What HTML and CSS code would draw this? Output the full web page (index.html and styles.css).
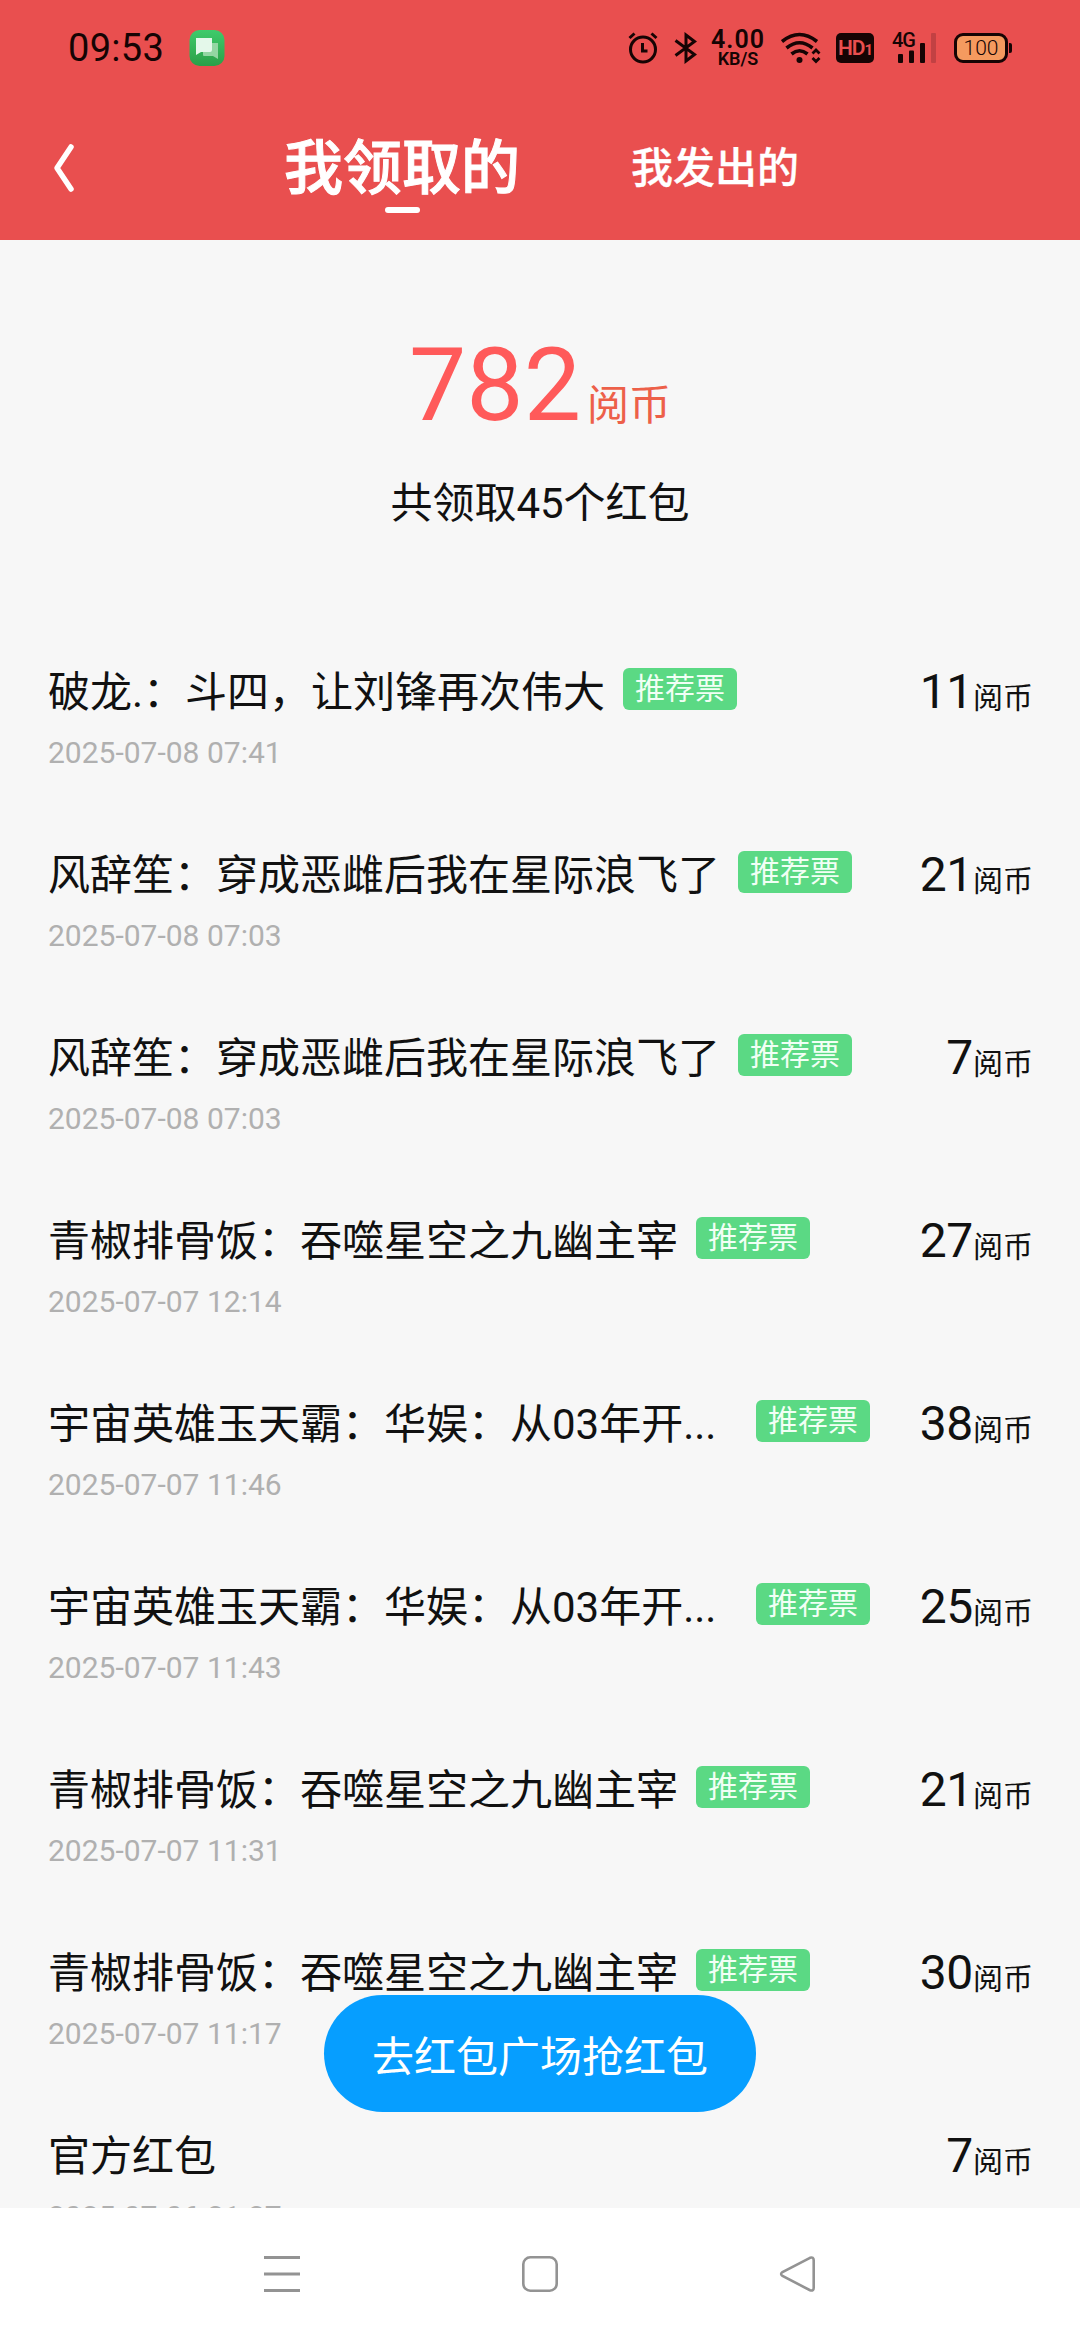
FILE: index.html
```
<!DOCTYPE html>
<html lang="zh-CN">
<head>
    <meta charset="UTF-8">
    <meta name="viewport" content="width=device-width, initial-scale=1.0">
    <title>我领取的</title>
    <link rel="stylesheet" href="styles.css">
</head>
<body>
    <header>
        <div class="status">
            <span class="time">09:53</span>
            <svg class="app-icon" width="36" height="38" viewBox="0 0 36 38">
                <defs>
                    <linearGradient id="green" x1="0" y1="0" x2="0" y2="1">
                        <stop offset="0" stop-color="#3fcb6b"/>
                        <stop offset="1" stop-color="#2b9f48"/>
                    </linearGradient>
                </defs>
                <rect x="0.5" y="1" width="35" height="36" rx="10" fill="url(#green)"/>
                <path d="M14 14h15v16l-5-3H15q-1 0-1-1z" fill="#93d6a3"/>
                <path d="M7 9h16v12q0 2-2 2H12l-5 3z" fill="#e4f8ea"/>
            </svg>
            <div class="status-right">
                <svg class="alarm" width="30" height="32" viewBox="0 0 30 32" fill="none" stroke="#160404" stroke-width="3">
                    <circle cx="15" cy="17.5" r="12.5"/>
                    <path d="M14.5 11v8h5M1.5 6l5-4.5M28.5 6l-5-4.5"/>
                </svg>
                <svg class="bluetooth" width="24" height="32" viewBox="0 0 24 32" fill="none" stroke="#160404" stroke-width="3">
                    <path d="M1.5 8.5l19 14-8.5 6.5V3l8.5 6.5-19 14"/>
                </svg>
                <div class="speed"><b>4.00</b><span>KB/S</span></div>
                <svg class="wifi" width="40" height="32" viewBox="0 0 40 32" fill="none" stroke="#160404" stroke-width="3.6">
                    <path d="M1 9.5q17.5-14 35 0M5.5 16q13-10.5 26 0M10.5 22q8-6.5 16 0"/>
                    <circle cx="18.5" cy="28" r="3" fill="#160404" stroke="none"/>
                    <path d="M31.5 21.500l3.500-3.500 3.500 3.500M31.500 26l3.500 3.500 3.500-3.500" stroke-width="2.8"/>
                </svg>
                <div class="hd">HD<small>1</small></div>
                <div class="signal">
                    <span>4G</span>
                    <svg width="44" height="32" viewBox="0 0 44 32" fill="#160404">
                        <rect x="6" y="22" width="5" height="9" rx="1"/>
                        <rect x="17" y="18.5" width="5" height="12.5" rx="1"/>
                        <rect x="28" y="11" width="5" height="20" rx="1"/>
                        <rect x="39" y="1" width="5" height="30" rx="1" fill="#c24143"/>
                    </svg>
                </div>
                <div class="battery">100</div>
            </div>
        </div>
        <nav class="tabs">
            <svg class="back" width="24" height="52" viewBox="0 0 24 52" fill="none" stroke="#fff" stroke-width="5.5" stroke-linecap="round" stroke-linejoin="round">
                <path d="M19 5L5 26l14 21"/>
            </svg>
            <a class="tab active">我领取的</a>
            <a class="tab">我发出的</a>
        </nav>
    </header>

    <main>
        <section class="summary">
            <div class="total">782<span>阅币</span></div>
            <p>共领取45个红包</p>
        </section>

        <ul class="records">
            <li>
                <div class="line"><span class="name">破龙.：斗四，让刘锋再次伟大</span><span class="tag">推荐票</span><span class="amount">11<small>阅币</small></span></div>
                <time>2025-07-08 07:41</time>
            </li>
            <li>
                <div class="line"><span class="name">风辞笙：穿成恶雌后我在星际浪飞了</span><span class="tag">推荐票</span><span class="amount">21<small>阅币</small></span></div>
                <time>2025-07-08 07:03</time>
            </li>
            <li>
                <div class="line"><span class="name">风辞笙：穿成恶雌后我在星际浪飞了</span><span class="tag">推荐票</span><span class="amount">7<small>阅币</small></span></div>
                <time>2025-07-08 07:03</time>
            </li>
            <li>
                <div class="line"><span class="name">青椒排骨饭：吞噬星空之九幽主宰</span><span class="tag">推荐票</span><span class="amount">27<small>阅币</small></span></div>
                <time>2025-07-07 12:14</time>
            </li>
            <li>
                <div class="line"><span class="name long">宇宙英雄玉天霸：华娱：从03年开...</span><span class="tag">推荐票</span><span class="amount">38<small>阅币</small></span></div>
                <time>2025-07-07 11:46</time>
            </li>
            <li>
                <div class="line"><span class="name long">宇宙英雄玉天霸：华娱：从03年开...</span><span class="tag">推荐票</span><span class="amount">25<small>阅币</small></span></div>
                <time>2025-07-07 11:43</time>
            </li>
            <li>
                <div class="line"><span class="name">青椒排骨饭：吞噬星空之九幽主宰</span><span class="tag">推荐票</span><span class="amount">21<small>阅币</small></span></div>
                <time>2025-07-07 11:31</time>
            </li>
            <li>
                <div class="line"><span class="name">青椒排骨饭：吞噬星空之九幽主宰</span><span class="tag">推荐票</span><span class="amount">30<small>阅币</small></span></div>
                <time>2025-07-07 11:17</time>
            </li>
            <li>
                <div class="line"><span class="name">官方红包</span><span class="amount">7<small>阅币</small></span></div>
                <time>2025-07-06 21:27</time>
            </li>
        </ul>

        <button class="go">去红包广场抢红包</button>
    </main>

    <footer>
        <svg width="40" height="40" viewBox="0 0 40 40" fill="none" stroke="#939393" stroke-width="3">
            <path d="M2 3.5h36M2 20h36M2 36.5h36"/>
        </svg>
        <svg width="40" height="40" viewBox="0 0 40 40" fill="none" stroke="#939393" stroke-width="2.6">
            <rect x="3.3" y="3.3" width="33.4" height="33.4" rx="7"/>
        </svg>
        <svg width="40" height="40" viewBox="0 0 40 40" fill="none" stroke="#939393" stroke-width="2.6">
            <path d="M32 3.8L4.5 18q-2.8 2 0 4L32 36.2q3.7 1.2 3.7-2.5V6.3q0-3.7-3.7-2.5z"/>
        </svg>
    </footer>
</body>
</html>
```
FILE: styles.css
```
* {
    box-sizing: border-box;
}
body {
    margin: 0;
    width: 1080px;
    height: 2340px;
    display: flex;
    flex-direction: column;
    overflow: hidden;
    background-color: #f7f7f7;
    color: #111;
    font-family: Roboto, "Noto Sans CJK SC", sans-serif;
}
header {
    height: 240px;
    flex: none;
    background-color: #e94f4f;
}
.status {
    display: flex;
    align-items: center;
    height: 96px;
    padding: 0 68px;
    color: #160404;
}
.time {
    width: 121px;
    font-size: 38px;
    letter-spacing: 0.3px;
}
.status-right {
    display: flex;
    align-items: center;
    margin-left: auto;
}
.bluetooth {
    margin-left: 16px;
}
.speed {
    display: flex;
    flex-direction: column;
    align-items: center;
    width: 54px;
    margin-left: 13px;
}
.speed b {
    font-size: 25px;
    font-weight: 600;
    line-height: 21px;
    letter-spacing: 1px;
}
.speed span {
    font-size: 18px;
    font-weight: 600;
    line-height: 18px;
}
.wifi {
    margin-left: 16px;
}
.hd {
    display: flex;
    justify-content: center;
    align-items: baseline;
    width: 38px;
    height: 30px;
    margin-left: 15px;
    border-radius: 5px;
    background-color: #160404;
    color: #e94f4f;
    font-size: 21px;
    font-weight: 600;
    line-height: 31px;
    letter-spacing: -1px;
}
.hd small {
    font-size: 15px;
    font-weight: 700;
}
.signal {
    position: relative;
    width: 44px;
    height: 32px;
    margin-left: 18px;
}
.signal span {
    position: absolute;
    left: 0;
    top: 0;
    font-size: 20px;
    font-weight: 500;
    line-height: 17px;
    letter-spacing: -1px;
}
.battery {
    position: relative;
    width: 54px;
    height: 30px;
    margin: 0 4px 0 18px;
    border: 3px solid #160404;
    border-radius: 9px;
    background-color: #f59a5f;
    font-size: 21px;
    font-weight: 300;
    line-height: 24px;
    text-align: center;
}
.battery::after {
    content: "";
    position: absolute;
    right: -7px;
    top: 7px;
    width: 3px;
    height: 10px;
    border-radius: 0 2px 2px 0;
    background-color: #160404;
}
.tabs {
    display: flex;
    align-items: center;
    height: 144px;
    padding-left: 52px;
    color: #fff;
}
.tab {
    margin: -7px 0 0 111px;
    font-size: 42px;
    font-weight: 500;
    -webkit-text-stroke: 0.3px #fff;
}
.tab.active {
    position: relative;
    margin: -9px 0 0 208px;
    font-size: 59px;
    -webkit-text-stroke: 1px #fff;
}
.tab.active::after {
    content: "";
    position: absolute;
    left: 50%;
    bottom: -7px;
    width: 35px;
    height: 6px;
    margin-left: -17px;
    border-radius: 3px;
    background-color: #fff;
}
main {
    position: relative;
    flex: 1;
    min-height: 0;
    overflow: hidden;
}
.summary {
    height: 392px;
    padding-top: 85px;
    text-align: center;
}
.total {
    height: 120px;
    color: #ff5a5a;
    font-size: 102px;
    line-height: 120px;
}
.total span {
    margin-left: 6px;
    color: #ed6049;
    font-size: 42px;
}
.summary p {
    margin: 27px 0 0;
    font-size: 42px;
    line-height: 64px;
}
.records {
    margin: 0;
    padding: 0 48px;
    list-style: none;
}
.records li {
    height: 183px;
    padding-top: 30px;
}
.line {
    display: flex;
    align-items: center;
    height: 60px;
}
.name {
    margin-top: -7px;
    font-size: 42px;
    white-space: nowrap;
}
.name.long {
    width: 690px;
}
.tag {
    width: 114px;
    height: 42px;
    margin: -6px 0 0 18px;
    border-radius: 6px;
    background-color: #5bd984;
    color: #f1fff5;
    font-size: 30px;
    line-height: 41px;
    text-align: center;
}
.amount {
    margin: -2px -1px 0 auto;
    font-size: 48px;
    letter-spacing: -0.3px;
}
.amount small {
    font-size: 30px;
    letter-spacing: 0;
}
time {
    display: block;
    color: #b0b0b0;
    font-size: 30px;
    line-height: 61px;
}
.go {
    position: absolute;
    left: 324px;
    bottom: 96px;
    width: 432px;
    height: 117px;
    border: none;
    border-radius: 59px;
    background-color: #069eff;
    color: #fff;
    font-family: inherit;
    font-size: 42px;
}
footer {
    display: flex;
    flex: none;
    align-items: center;
    justify-content: center;
    gap: 218px;
    height: 132px;
    background-color: #fff;
}
```
